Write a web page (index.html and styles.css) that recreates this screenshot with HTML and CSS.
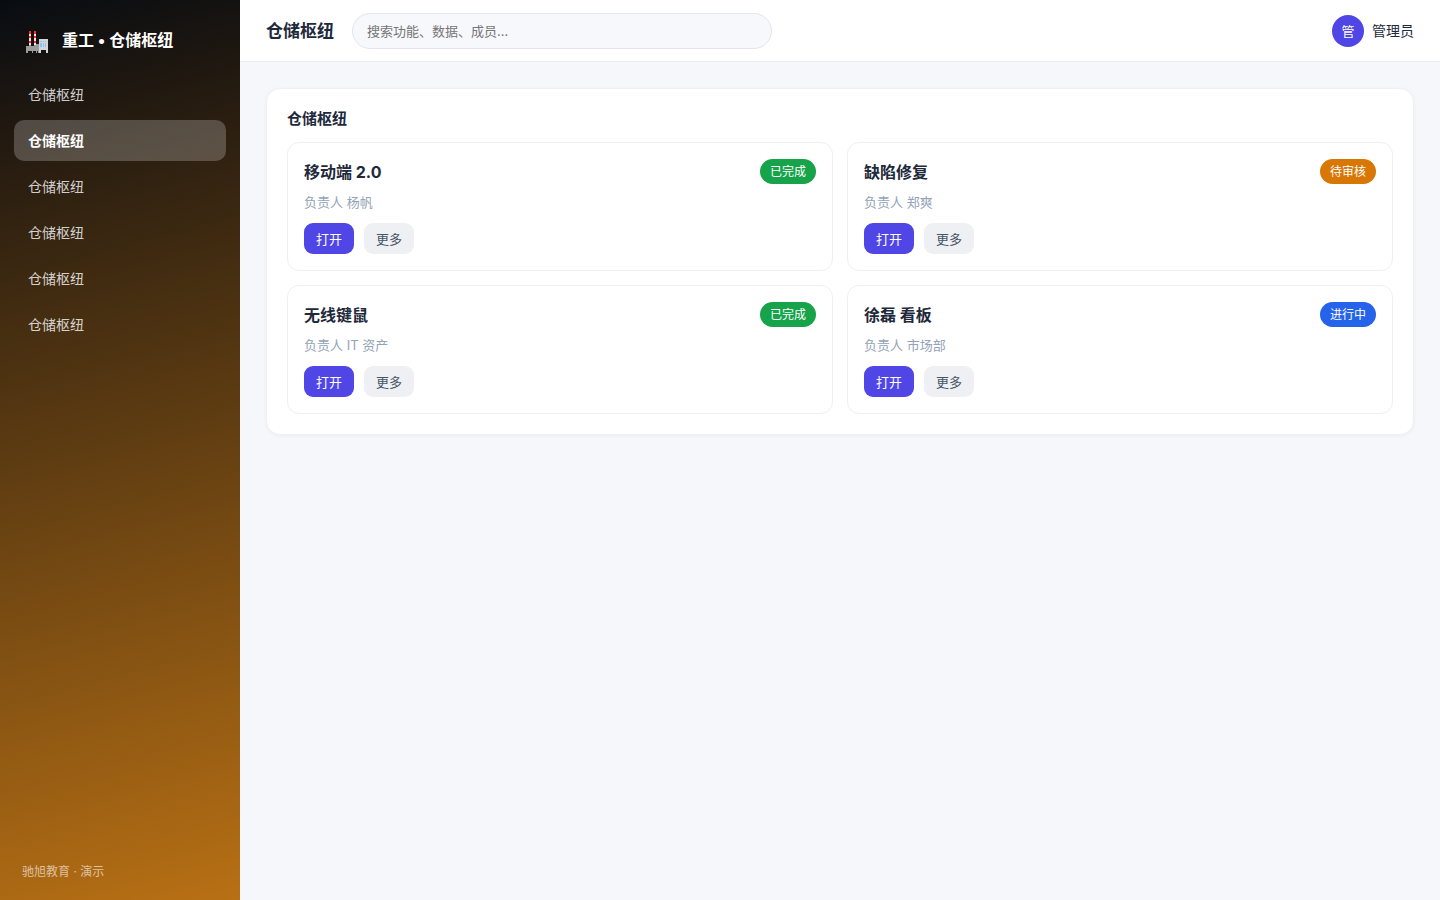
FILE: index.html
```
<!DOCTYPE html>
<html lang="zh-CN">
<head>
  <meta charset="UTF-8">
  <meta name="viewport" content="width=device-width, initial-scale=1">
  <title>重工 • 仓储枢纽</title>
  <link rel="stylesheet" href="styles.css">
</head>
<body>
  <aside class="sidebar">
    <div class="brand">
      <svg class="brand-icon" viewBox="0 0 24 24" shape-rendering="crispEdges" aria-hidden="true">
        <path fill="#f0e4e4" d="M4 1h2v15H4zM9 1h2v15H9z"/>
        <path fill="#fb2d2d" d="M4 1h2v3H4zM4 6h2v2H4zM4 11h2v2H4zM9 1h2v3H9zM9 6h2v2H9zM9 11h2v2H9z"/>
        <path fill="#9b9b9b" d="M1 16h3v-1h2v1h3v-1h2v-1h3v9h-1v-2h-1v2h-1v-2H8v2H7v-2H3v2H1z"/>
        <path fill="#d3d5d6" d="M14 9h9v14h-2v-3h-5v3h-2z"/>
        <path fill="#83c5f5" d="M15 11h2v1h-2zM18 11h1v1h-1zM20 11h1v1h-1zM15 13h2v4h-2zM18 13h1v4h-1zM20 13h1v4h-1z"/>
      </svg>
      <span>重工 • 仓储枢纽</span>
    </div>
    <nav class="nav">
      <a href="#">仓储枢纽</a>
      <a href="#" class="active">仓储枢纽</a>
      <a href="#">仓储枢纽</a>
      <a href="#">仓储枢纽</a>
      <a href="#">仓储枢纽</a>
      <a href="#">仓储枢纽</a>
    </nav>
    <div class="sidebar-foot">驰旭教育 · 演示</div>
  </aside>

  <div class="main">
    <header class="topbar">
      <h1>仓储枢纽</h1>
      <input class="search" type="search" placeholder="搜索功能、数据、成员…" aria-label="搜索">
      <div class="user">
        <span class="avatar">管</span>
        <span>管理员</span>
      </div>
    </header>

    <main class="content">
      <section class="panel">
        <h2>仓储枢纽</h2>
        <div class="grid">
          <article class="card">
            <div class="card-head">
              <h3>移动端 2.0</h3>
              <span class="badge done">已完成</span>
            </div>
            <p>负责人 杨帆</p>
            <div class="actions">
              <button class="btn primary" type="button">打开</button>
              <button class="btn" type="button">更多</button>
            </div>
          </article>
          <article class="card">
            <div class="card-head">
              <h3>缺陷修复</h3>
              <span class="badge pending">待审核</span>
            </div>
            <p>负责人 郑爽</p>
            <div class="actions">
              <button class="btn primary" type="button">打开</button>
              <button class="btn" type="button">更多</button>
            </div>
          </article>
          <article class="card">
            <div class="card-head">
              <h3>无线键鼠</h3>
              <span class="badge done">已完成</span>
            </div>
            <p>负责人 IT 资产</p>
            <div class="actions">
              <button class="btn primary" type="button">打开</button>
              <button class="btn" type="button">更多</button>
            </div>
          </article>
          <article class="card">
            <div class="card-head">
              <h3>徐磊 看板</h3>
              <span class="badge doing">进行中</span>
            </div>
            <p>负责人 市场部</p>
            <div class="actions">
              <button class="btn primary" type="button">打开</button>
              <button class="btn" type="button">更多</button>
            </div>
          </article>
        </div>
      </section>
    </main>
  </div>
</body>
</html>
```
FILE: styles.css
```
* {
  box-sizing: border-box;
}
body {
  margin: 0;
  min-height: 100vh;
  display: flex;
  font-family: Inter, "Noto Sans CJK SC", sans-serif;
  font-size: 14px;
  line-height: 20px;
  color: #1e293b;
  background: #f5f7fb;
}
h1, h2, h3, p {
  margin: 0;
}

/* sidebar */
.sidebar {
  width: 240px;
  flex-shrink: 0;
  display: flex;
  flex-direction: column;
  padding: 18px 14px;
  color: #fff;
  background: linear-gradient(165deg, #080c12 0%, #1e1710 12%, #b87014 100%);
}
.brand {
  display: flex;
  align-items: center;
  gap: 13px;
  height: 44px;
  padding: 0 11px;
  font-size: 16px;
  font-weight: 700;
}
.brand-icon {
  width: 24px;
  height: 24px;
  margin-top: 4px;
}
.nav {
  display: flex;
  flex-direction: column;
  gap: 5px;
  margin-top: 12px;
}
.nav a {
  height: 41px;
  padding: 0 14px;
  border-radius: 10px;
  line-height: 41px;
  color: rgba(255, 255, 255, 0.8);
  text-decoration: none;
}
.nav a.active {
  background: rgba(255, 255, 255, 0.22);
  color: #fff;
  font-weight: 700;
}
.sidebar-foot {
  margin-top: auto;
  padding: 0 8px;
  font-size: 12px;
  color: rgba(255, 255, 255, 0.6);
}

/* top bar */
.main {
  flex: 1;
  min-width: 0;
}
.topbar {
  display: flex;
  align-items: center;
  gap: 18px;
  height: 62px;
  padding: 0 26px;
  background: #fff;
  border-bottom: 1px solid #eceef3;
}
.topbar h1 {
  font-size: 17px;
}
.search {
  width: 420px;
  height: 36px;
  padding: 0 14px;
  border: 1px solid #e2e5ec;
  border-radius: 18px;
  background: #f7f8fc;
  font-family: inherit;
  font-size: 13px;
  outline: none;
}
.search::placeholder {
  color: #757575;
}
.user {
  display: flex;
  align-items: center;
  gap: 8px;
  margin-left: auto;
}
.avatar {
  width: 32px;
  height: 32px;
  border-radius: 50%;
  background: #4f46e5;
  color: #fff;
  font-size: 13px;
  line-height: 32px;
  text-align: center;
}

/* content */
.content {
  padding: 26px;
}
.panel {
  padding: 20px;
  border: 1px solid #eef0f4;
  border-radius: 14px;
  background: #fff;
  box-shadow: 0 1px 4px rgba(15, 23, 42, 0.04);
}
.panel h2 {
  margin-bottom: 13px;
  font-size: 15px;
}
.grid {
  display: grid;
  grid-template-columns: 1fr 1fr;
  gap: 14px;
}
.card {
  padding: 16px;
  border: 1px solid #eef0f4;
  border-radius: 12px;
}
.card-head {
  display: flex;
  align-items: center;
  justify-content: space-between;
}
.card h3 {
  font-size: 16px;
}
.badge {
  padding: 0 10px;
  border-radius: 13px;
  font-size: 12px;
  line-height: 25px;
  color: #fff;
}
.done {
  background: #16a34a;
}
.pending {
  background: #d97706;
}
.doing {
  background: #2563eb;
}
.card p {
  margin: 8px 0 11px;
  font-size: 13px;
  color: #94a3b8;
}
.actions {
  display: flex;
  gap: 10px;
}
.btn {
  height: 31px;
  padding: 0 12px;
  border: none;
  border-radius: 9px;
  background: #eef0f4;
  color: #475569;
  font-family: inherit;
  font-size: 13px;
  cursor: pointer;
}
.btn.primary {
  background: #4f46e5;
  color: #fff;
}
```
